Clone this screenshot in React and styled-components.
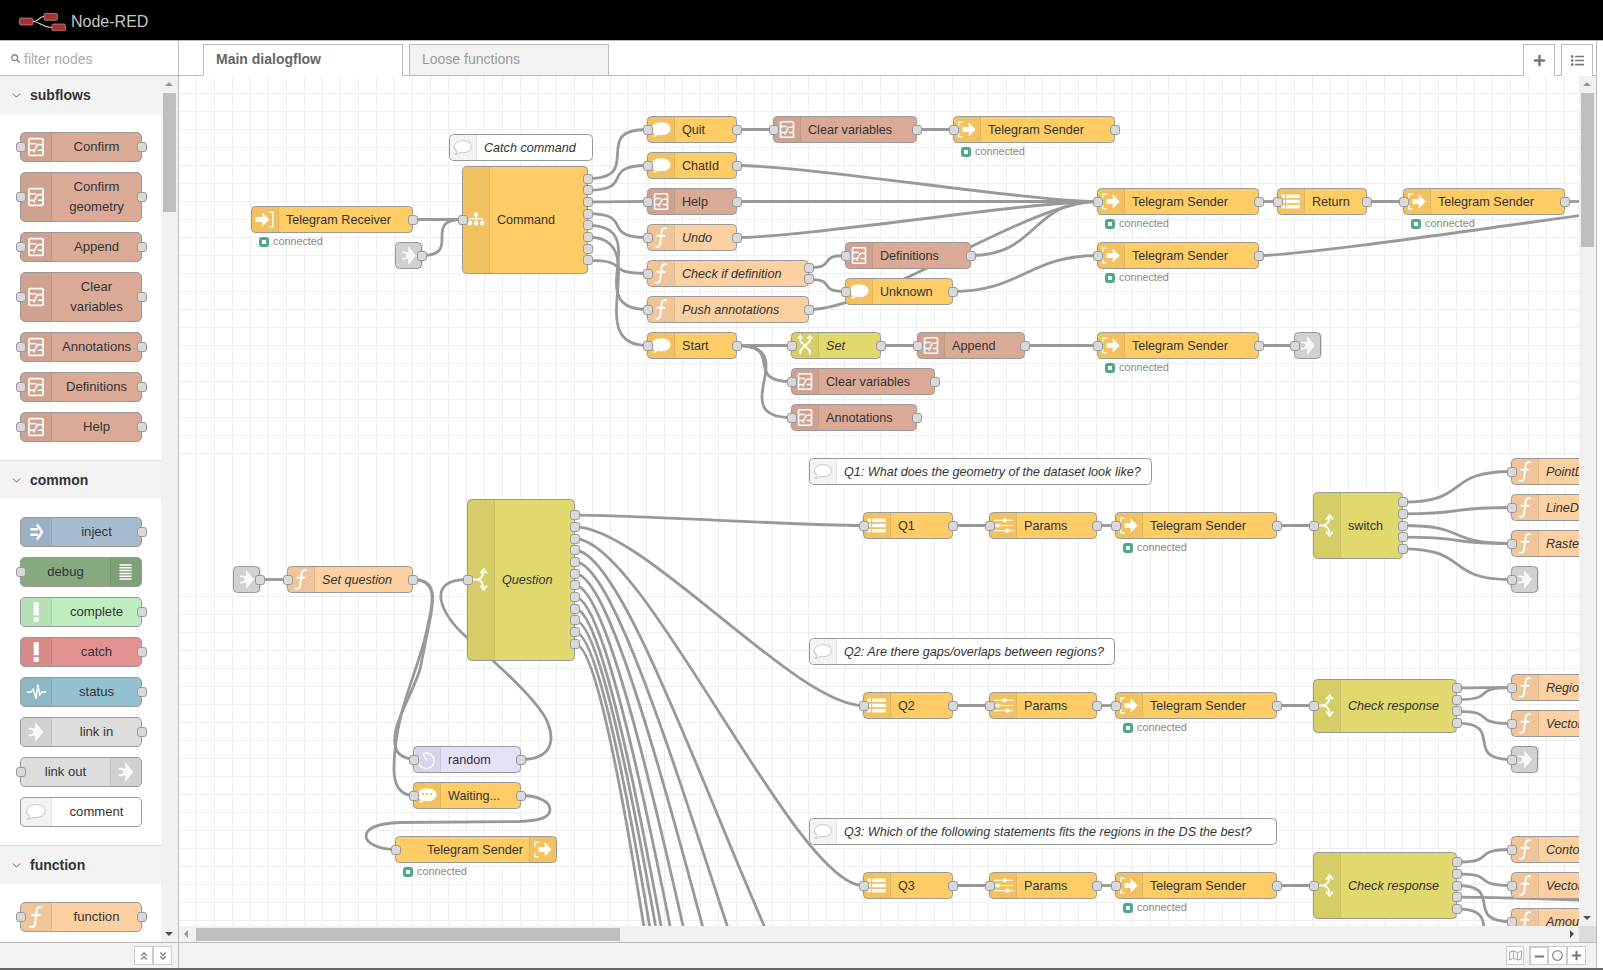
import React from "react";
import styled, { createGlobalStyle } from "styled-components";
import { ChevronDown } from "lucide-react";
import {
	FaSearch,
	FaPlus,
	FaMinus,
	FaList,
	FaAngleDoubleUp,
	FaAngleDoubleDown,
	FaRegMap,
	FaRegCircle,
} from "react-icons/fa";

const GlobalStyle = createGlobalStyle`
	html, body {
		margin: 0;
		height: 100%;
		overflow: hidden;
		background: #fff;
		font-family: "Liberation Sans", Arial, sans-serif;
		color: #333;
	}
	* {
		box-sizing: border-box;
	}
`;

const Page = styled.div`
	height: 970px;
	display: flex;
	flex-direction: column;
	border-bottom: 2px solid #666;
`;

const Header = styled.header`
	height: 41px;
	flex: none;
	background: #000;
	border-bottom: 1px solid #bbb;
	display: flex;
	align-items: center;
	padding: 3px 0 0 19px;
	gap: 5px;
`;

const Brand = styled.span`
	font-size: 16px;
	color: #c7c7c7;
`;

const Main = styled.div`
	flex: 1;
	min-height: 0;
	display: flex;
`;

const Sidebar = styled.aside`
	width: 179px;
	flex: none;
	display: flex;
	flex-direction: column;
	border-right: 1px solid #bbb;
`;

const Filter = styled.div`
	height: 35px;
	flex: none;
	display: flex;
	align-items: center;
	gap: 4px;
	padding: 1px 0 0 11px;
	border-bottom: 1px solid #bbb;
	font-size: 14px;
	color: #aaa;
	svg {
		color: #888;
		font-size: 9px;
	}
`;

const PaletteBody = styled.div`
	flex: 1;
	min-height: 0;
	display: flex;
`;

const PaletteList = styled.div`
	width: 161px;
	flex: none;
	overflow: hidden;
`;

const Category = styled.section`
	border-top: ${(props) => (props.$first ? "0" : "1px solid #ddd")};
`;

const CategoryTitle = styled.div`
	height: 38px;
	background: #f3f3f3;
	display: flex;
	align-items: center;
	gap: 7px;
	padding-left: 10px;
	font-size: 14px;
	font-weight: bold;
	color: #333;
	svg {
		color: #555;
	}
`;

const CategoryNodes = styled.div`
	padding: 18px 0 18px 20px;
	display: flex;
	flex-direction: column;
	gap: 10px;
`;

const PaletteNode = styled.div`
	position: relative;
	width: 122px;
	min-height: 30px;
	display: flex;
	flex-direction: ${(props) => (props.$iconRight ? "row-reverse" : "row")};
	background: ${(props) => props.$bg};
	border: 1px solid #999;
	border-radius: 5px;
`;

const PaletteIcon = styled.div`
	width: 31px;
	flex: none;
	display: flex;
	align-items: center;
	justify-content: center;
	background: rgba(0, 0, 0, 0.05);
	border-radius: ${(props) => (props.$right ? "0 4px 4px 0" : "4px 0 0 4px")};
	border-${(props) => (props.$right ? "left" : "right")}: 1px solid rgba(0, 0, 0, 0.08);
	svg {
		display: block;
	}
`;

const PaletteLabel = styled.div`
	flex: 1;
	padding: 4px 5px;
	font-size: 13.1px;
	line-height: 20px;
	text-align: center;
`;

const PalettePort = styled.span`
	position: absolute;
	top: 50%;
	${(props) => (props.$out ? "right: -6px" : "left: -5px")};
	width: 10px;
	height: 10px;
	margin-top: -5px;
	background: #d9d9d9;
	border: 1px solid #999;
	border-radius: 3px;
`;

const Track = styled.div`
	flex: none;
	width: ${(props) => (props.$horizontal ? "auto" : "17px")};
	height: ${(props) => (props.$horizontal ? "16px" : "auto")};
	flex-grow: ${(props) => (props.$horizontal ? 1 : 0)};
	background: #f1f1f1;
	position: relative;
	display: flex;
	flex-direction: ${(props) => (props.$horizontal ? "row" : "column")};
	align-items: center;
`;

const Thumb = styled.div`
	background: #bebebe;
	flex: none;
	width: ${(props) => (props.$horizontal ? props.$size : 13)}px;
	height: ${(props) => (props.$horizontal ? 13 : props.$size)}px;
	margin: ${(props) => (props.$horizontal ? "0 0 0 17px" : "17px 0 0 0")};
`;

const Arrow = styled.span`
	position: absolute;
	width: 0;
	height: 0;
	${(props) =>
		({
			up: "top: 6px; left: 4px; border: 4px solid transparent; border-top: 0; border-bottom: 4px solid #999;",
			down: "bottom: 6px; left: 4px; border: 4px solid transparent; border-bottom: 0; border-top: 4px solid #505050;",
			left: "left: 5px; top: 4px; border: 4px solid transparent; border-left: 0; border-right: 4px solid #999;",
			right: "right: 5px; top: 4px; border: 4px solid transparent; border-right: 0; border-left: 4px solid #505050;",
		})[props.$dir]}
`;

const Foot = styled.div`
	height: 26px;
	flex: none;
	background: #f3f3f3;
	border-top: 1px solid #bbb;
	display: flex;
	align-items: center;
	justify-content: flex-end;
	padding: 0 ${(props) => props.$pad}px 0 0;
`;

const FootButton = styled.button`
	width: ${(props) => props.$w || 19}px;
	height: 19px;
	padding: 0;
	margin-left: ${(props) => props.$gap || 0}px;
	display: flex;
	align-items: center;
	justify-content: center;
	background: #fff;
	border: 1px solid #ccc;
	border-width: ${(props) => (props.$focus ? "2px 1px 1px 2px" : "1px")};
	color: ${(props) => props.$color || "#888"};
	font-size: ${(props) => props.$size || 10}px;
`;

const Workspace = styled.div`
	width: 1418px;
	flex: none;
	display: flex;
	flex-direction: column;
	border-right: 1px solid #bbb;
`;

const TabBar = styled.div`
	height: 35px;
	flex: none;
	display: flex;
	align-items: flex-end;
	padding-left: 24px;
	gap: 6px;
	border-bottom: 1px solid #bbb;
`;

const Tab = styled.div`
	width: ${(props) => props.$w}px;
	height: 32px;
	margin-bottom: -1px;
	padding: 0 0 2px 12px;
	display: flex;
	align-items: center;
	font-size: 14px;
	font-weight: ${(props) => (props.$active ? "bold" : "normal")};
	color: ${(props) => (props.$active ? "#666" : "#999")};
	background: ${(props) => (props.$active ? "#fff" : "#f3f3f3")};
	border: 1px solid #bbb;
	border-bottom-color: ${(props) => (props.$active ? "#fff" : "#bbb")};
`;

const TabTools = styled.div`
	margin-left: auto;
	display: flex;
	gap: 6px;
	padding-right: 3px;
`;

const TabTool = styled.button`
	width: 32px;
	height: 32px;
	margin-bottom: -1px;
	padding: 0;
	display: flex;
	align-items: center;
	justify-content: center;
	background: #fff;
	border: 1px solid #bbb;
	border-bottom: 0;
	color: #777;
	font-size: 13px;
`;

const ChartRow = styled.div`
	flex: 1;
	min-height: 0;
	display: flex;
`;

const ScrollRow = styled.div`
	height: 16px;
	flex: none;
	display: flex;
`;

const Corner = styled.div`
	width: 17px;
	flex: none;
	background: #dcdcdc;
`;

const Viewport = styled.div`
	flex: 1;
	position: relative;
	overflow: hidden;
	background-color: #fff;
	background-image: repeating-linear-gradient(to right, transparent 0 17px, #eee 17px 18px),
		repeating-linear-gradient(to bottom, transparent 0 17px, #eee 17px 18px),
		repeating-linear-gradient(to bottom, transparent 0 17px, #eee 17px 18px);
	background-size: 100% 100%, 100% 378px, 100% 432px;
	background-position: 0 0, 0 0, 0 503px;
	background-repeat: no-repeat;
`;

const WireLayer = styled.svg`
	position: absolute;
	left: 0;
	top: 0;
	width: 1400px;
	height: 850px;
`;

const Wire = styled.path`
	fill: none;
	stroke: #999;
	stroke-width: 2.8;
`;

const FlowNode = styled.div`
	position: absolute;
	left: ${(props) => props.$x - 179}px;
	top: ${(props) => props.$y - 76.5}px;
	width: ${(props) => props.$w}px;
	height: ${(props) => props.$h}px;
	display: flex;
	flex-direction: ${(props) => (props.$iconRight ? "row-reverse" : "row")};
	align-items: stretch;
	background: ${(props) => props.$bg};
	border: 1px solid #999;
	border-radius: 4.5px;
`;

const FlowIcon = styled.div`
	width: 27px;
	flex: none;
	display: flex;
	align-items: center;
	justify-content: center;
	background: ${(props) => (props.$plain ? "#f3f3f3" : "rgba(0, 0, 0, 0.05)")};
	border-radius: ${(props) => (props.$right ? "0 4px 4px 0" : "4px 0 0 4px")};
	border-${(props) => (props.$right ? "left" : "right")}: 1px solid rgba(0, 0, 0, 0.06);
`;

const FlowLabel = styled.div`
	flex: 1;
	display: flex;
	align-items: center;
	padding: 0 ${(props) => (props.$iconRight ? 7 : 0)}px 0 ${(props) => (props.$iconRight ? 31 : 7)}px;
	font-size: 12.6px;
	font-style: ${(props) => (props.$italic ? "italic" : "normal")};
	white-space: nowrap;
	overflow: hidden;
	color: #333;
`;

const FlowPort = styled.span`
	position: absolute;
	top: ${(props) => props.$top}px;
	${(props) => (props.$out ? "right: -5.5px" : "left: -5.5px")};
	width: 10px;
	height: 10px;
	margin-top: -5px;
	background: #d9d9d9;
	border: 1px solid #999;
	border-radius: 3px;
`;

const StatusRow = styled.div`
	position: absolute;
	top: 100%;
	left: 7px;
	margin-top: 4px;
	display: flex;
	align-items: center;
	gap: 4px;
	font-size: 10.8px;
	line-height: 11px;
	color: #888;
`;

const StatusDot = styled.span`
	width: 10px;
	height: 10px;
	background: #fff;
	border: 3px solid #4fa88a;
	border-radius: 3px;
`;

const Logo = () => (
	<svg width="47" height="18" viewBox="0 0 47 18">
		<path d="M14 8.5C20 8.5 20 3.5 25 3.5M14 8.5C20 8.5 24 14.5 33 14.5" fill="none" stroke="#d8d8d8" strokeWidth="1.2" />
		<rect x="0.5" y="5" width="13.5" height="7" rx="1.5" fill="#a33333" stroke="#d8b0b0" strokeWidth=".6" />
		<rect x="25" y="0.3" width="13.5" height="7" rx="1.5" fill="#a33333" stroke="#d8b0b0" strokeWidth=".6" />
		<rect x="33" y="11" width="13.5" height="7" rx="1.5" fill="#a33333" stroke="#d8b0b0" strokeWidth=".6" />
	</svg>
);

const W = "#fff";

// drawings share a 30x30 box
const glyphs = {
	subflow: (
		<g fill="none" stroke={W} strokeWidth="1.8">
			<rect x="7.500" y="6" width="15" height="18" rx="1" />
			<path d="M7.500 11.500H15M7.500 18.500h5c3 0 2-6 5-6h5M17 18.500h5.500M13 18.500v2.500" />
		</g>
	),
	arrowIn: (
		<g fill={W}>
			<path d="M4 12h8V7l8 8-8 8v-5H4z" />
			<path d="M20 6.500h4v17h-4" fill="none" stroke={W} strokeWidth="1.400" />
		</g>
	),
	arrowOut: (
		<g fill={W}>
			<path d="M10 12h7V7l8 8-8 8v-5h-7z" />
			<path d="M10 6.500H5.500v5M5.500 18.500v5H10" fill="none" stroke={W} strokeWidth="1.400" />
		</g>
	),
	bubble: <path fill={W} d="M15 6.500c6.500 0 11 3.300 11 7.500s-4.500 7.500-11 7.500c-1.300 0-2.500-.1-3.500-.4-1.500 1.400-3.500 2.200-6 2.400 1.200-1 2-2.300 2.200-3.900C5.300 18.300 4 16.300 4 14c0-4.200 4.500-7.500 11-7.500z" />,
	waiting: (
		<g>
			<path fill={W} d="M15 6.500c6.500 0 11 3.300 11 7.500s-4.500 7.500-11 7.500c-1.300 0-2.500-.1-3.500-.4-1.500 1.400-3.500 2.200-6 2.400 1.200-1 2-2.300 2.200-3.900C5.300 18.300 4 16.300 4 14c0-4.200 4.500-7.500 11-7.500z" />
			<circle cx="10.500" cy="13.500" r="1.300" fill="#f0bd5c" />
			<circle cx="15" cy="13.500" r="1.300" fill="#f0bd5c" />
			<circle cx="19.500" cy="13.500" r="1.300" fill="#f0bd5c" />
		</g>
	),
	note: (
		<path fill="#fff" stroke="#ccc" strokeWidth="1.200" d="M15 7c6 0 10 3 10 7s-4 7-10 7c-1.200 0-2.400-.1-3.400-.4-1.500 1.400-3.200 2-5.600 2.200 1.200-1 1.900-2.200 2.100-3.700C5.800 18.200 5 16.200 5 14c0-4 4-7 10-7z" />
	),
	func: (
		<g fill="none" stroke={W} strokeWidth="2.200" strokeLinecap="round">
			<path d="M21 4.500c-3.500-1-4.800.8-5.300 4l-1.600 13c-.5 3.500-2 5-5.300 4" />
			<path d="M10.500 13H19" />
		</g>
	),
	tree: (
		<g fill={W}>
			<rect x="13" y="7" width="4.500" height="4.500" rx="1" />
			<rect x="6" y="17" width="4.500" height="4.500" rx="1" />
			<rect x="13" y="17" width="4.500" height="4.500" rx="1" />
			<rect x="20" y="17" width="4.500" height="4.500" rx="1" />
			<path d="M8.200 17v-3h14v3M15.200 11v6" fill="none" stroke={W} strokeWidth="1.200" />
		</g>
	),
	fork: (
		<g fill="none" stroke={W} strokeWidth="2.200">
			<path d="M5 15h5c4 0 7-3 8-9M10 15c4 0 7 3 8 9" />
			<path d="M14 8l4-5 4 5M14 22l4 5 4-5" strokeWidth="2" />
		</g>
	),
	list: (
		<g fill={W}>
			<rect x="4" y="7" width="4" height="4" />
			<rect x="9.500" y="7" width="15.500" height="4" />
			<rect x="4" y="13" width="4" height="4" />
			<rect x="9.500" y="13" width="15.500" height="4" />
			<rect x="4" y="19" width="4" height="4" />
			<rect x="9.500" y="19" width="15.500" height="4" />
		</g>
	),
	sliders: (
		<g fill={W} stroke={W} strokeWidth="1.200">
			<path d="M4 9h23M4 15h23M4 21h23" />
			<circle cx="17" cy="9" r="1.800" />
			<circle cx="9" cy="15" r="1.800" />
			<circle cx="20" cy="21" r="1.800" />
		</g>
	),
	shuffle: (
		<g fill="none" stroke={W} strokeWidth="2.200">
			<path d="M9.500 25v-4l11-11V6M20.500 25v-4l-11-11V6" />
			<path d="M6.500 7l3-3.500 3 3.500M17.500 7l3-3.500 3 3.500" strokeWidth="1.500" />
		</g>
	),
	clock: (
		<g fill="none" stroke={W} strokeWidth="1.600" opacity=".85">
			<path d="M10 8.500a9 9 0 1 1-3.700 3.500" />
			<path d="M15 16L10.500 9.500" />
		</g>
	),
	link: (
		<g opacity=".85">
			<path fill={W} d="M14 4l9 11-9 11v-7h-2v-8h2z" />
			<path fill="none" stroke={W} strokeWidth="2" d="M7 11.500h2.500a3.500 3.500 0 0 1 0 7H7M13 15h-1" />
		</g>
	),
	inject: (
		<g fill="none" stroke={W} strokeWidth="2.600">
			<path d="M9 12h8M9 18h8" />
			<path d="M16 7l5.500 8-5.500 8" />
		</g>
	),
	lines: (
		<g stroke={W} strokeWidth="1.600">
			<path d="M8 7.500h13M8 10.500h13M8 13.500h13M8 16.500h13M8 19.500h13M8 22.500h13" />
		</g>
	),
	alert: (
		<g fill={W}>
			<rect x="12.500" y="4.500" width="5.500" height="14" />
			<rect x="12.500" y="20.500" width="5.500" height="5" />
		</g>
	),
	wave: <path d="M5 15h5l2-3 3 10 2-15 2 11 2-3h5" fill="none" stroke={W} strokeWidth="1.600" />,
};

const Glyph = ({ name, size = 27 }) => (
	<svg width={size} height={size} viewBox="0 0 30 30">
		{glyphs[name]}
	</svg>
);

const colors = {
	tele: "#ffcc66",
	sub: "#dbaa97",
	func: "#fdd0a2",
	sw: "#e2d96e",
	link: "#ddd",
	note: "#fff",
	delay: "#e6e0f8",
};

// a canvas node: x, centre y, width, colour, drawing, label
const n = (id, x, cy, w, color, icon, label, extra = {}) => ({ id, x, cy, w, color, icon, label, h: 27, ins: 1, outs: 1, ...extra });

const nodes = [
	n("catch", 449, 148, 144, "note", "note", "Catch command", { italic: true, ins: 0, outs: 0 }),
	n("recv", 251, 220, 162, "tele", "arrowIn", "Telegram Receiver", { ins: 0, status: true }),
	n("linkA", 395, 256, 27, "link", "link", "", { ins: 0 }),
	n("cmd", 462, 220, 126, "tele", "tree", "Command", { h: 108, outs: 8 }),
	n("quit", 647, 130, 90, "tele", "bubble", "Quit"),
	n("chat", 647, 166, 90, "tele", "bubble", "ChatId"),
	n("help", 647, 202, 90, "sub", "subflow", "Help"),
	n("undo", 647, 238, 90, "func", "func", "Undo", { italic: true }),
	n("check", 647, 274, 162, "func", "func", "Check if definition", { italic: true, outs: 2 }),
	n("push", 647, 310, 162, "func", "func", "Push annotations", { italic: true }),
	n("start", 647, 346, 90, "tele", "bubble", "Start"),
	n("clear1", 773, 130, 144, "sub", "subflow", "Clear variables"),
	n("ts1", 953, 130, 162, "tele", "arrowOut", "Telegram Sender", { status: true }),
	n("ts2", 1097, 202, 162, "tele", "arrowOut", "Telegram Sender", { status: true }),
	n("ret", 1277, 202, 90, "tele", "list", "Return"),
	n("ts5", 1403, 202, 162, "tele", "arrowOut", "Telegram Sender", { status: true }),
	n("linkEnd", 1584, 202, 27, "link", "link", "", { outs: 0 }),
	n("defs", 845, 256, 126, "sub", "subflow", "Definitions"),
	n("unknown", 845, 292, 108, "tele", "bubble", "Unknown"),
	n("ts3", 1097, 256, 162, "tele", "arrowOut", "Telegram Sender", { status: true }),
	n("set", 791, 346, 90, "sw", "shuffle", "Set", { italic: true }),
	n("append", 917, 346, 108, "sub", "subflow", "Append"),
	n("ts4", 1097, 346, 162, "tele", "arrowOut", "Telegram Sender", { status: true }),
	n("linkB", 1294, 346, 27, "link", "link", "", { outs: 0 }),
	n("clear2", 791, 382, 144, "sub", "subflow", "Clear variables"),
	n("annot", 791, 418, 126, "sub", "subflow", "Annotations"),

	n("linkC", 233, 580, 27, "link", "link", "", { ins: 0 }),
	n("setq", 287, 580, 126, "func", "func", "Set question", { italic: true }),
	n("question", 467, 580, 108, "sw", "fork", "Question", { italic: true, h: 162, outs: 12 }),
	n("random", 413, 760, 108, "delay", "clock", "random"),
	n("waiting", 413, 796, 108, "tele", "waiting", "Waiting..."),
	n("tsBack", 395, 850, 162, "tele", "arrowOut", "Telegram Sender", { iconRight: true, outs: 0, status: true }),

	n("c1", 809, 472, 343, "note", "note", "Q1: What does the geometry of the dataset look like?", { italic: true, ins: 0, outs: 0 }),
	n("q1", 863, 526, 90, "tele", "list", "Q1"),
	n("p1", 989, 526, 108, "tele", "sliders", "Params"),
	n("t1", 1115, 526, 162, "tele", "arrowOut", "Telegram Sender", { status: true }),
	n("switch", 1313, 526, 90, "sw", "fork", "switch", { h: 67, outs: 5 }),
	n("point", 1511, 472, 126, "func", "func", "PointData", { italic: true, outs: 0 }),
	n("line", 1511, 508, 126, "func", "func", "LineData", { italic: true, outs: 0 }),
	n("raster", 1511, 544, 126, "func", "func", "RasterData", { italic: true, outs: 0 }),
	n("linkD", 1511, 580, 27, "link", "link", "", { outs: 0 }),

	n("c2", 809, 652, 306, "note", "note", "Q2: Are there gaps/overlaps between regions?", { italic: true, ins: 0, outs: 0 }),
	n("q2", 863, 706, 90, "tele", "list", "Q2"),
	n("p2", 989, 706, 108, "tele", "sliders", "Params"),
	n("t2", 1115, 706, 162, "tele", "arrowOut", "Telegram Sender", { status: true }),
	n("resp2", 1313, 706, 144, "sw", "fork", "Check response", { italic: true, h: 54, outs: 4 }),
	n("region", 1511, 688, 126, "func", "func", "Regions", { italic: true, outs: 0 }),
	n("vector", 1511, 724, 126, "func", "func", "Vector", { italic: true, outs: 0 }),
	n("linkE", 1511, 760, 27, "link", "link", "", { outs: 0 }),

	n("c3", 809, 832, 468, "note", "note", "Q3: Which of the following statements fits the regions in the DS the best?", { italic: true, ins: 0, outs: 0 }),
	n("q3", 863, 886, 90, "tele", "list", "Q3"),
	n("p3", 989, 886, 108, "tele", "sliders", "Params"),
	n("t3", 1115, 886, 162, "tele", "arrowOut", "Telegram Sender", { status: true }),
	n("resp3", 1313, 886, 144, "sw", "fork", "Check response", { italic: true, h: 67, outs: 5 }),
	n("contour", 1511, 850, 126, "func", "func", "Contour", { italic: true, outs: 0 }),
	n("vector2", 1511, 886, 126, "func", "func", "Vector", { italic: true, outs: 0 }),
	n("amount", 1511, 922, 126, "func", "func", "Amount", { italic: true, outs: 0 }),
];

const byId = Object.fromEntries(nodes.map((node) => [node.id, node]));

const portY = (node, i) => node.cy + (i - (node.outs - 1) / 2) * 11.7;

const curve = (x1, y1, x2, y2) => {
	const delta = Math.hypot(x2 - x1, y2 - y1);
	const c = Math.min(67.5, 0.75 * delta);
	return `M${x1} ${y1}C${x1 + c} ${y1} ${x2 - c} ${y2} ${x2} ${y2}`;
};

// [from, output, to]: "to" is a node id, or a point for what lies off the canvas
const links = [
	["recv", 0, "cmd"], ["linkA", 0, "cmd"],
	["cmd", 0, "quit"], ["cmd", 1, "chat"], ["cmd", 2, "help"], ["cmd", 3, "undo"],
	["cmd", 4, "push"], ["cmd", 5, "start"], ["cmd", 7, "check"],
	["quit", 0, "clear1"], ["clear1", 0, "ts1"],
	["chat", 0, "ts2"], ["help", 0, "ts2"], ["undo", 0, "ts2"], ["defs", 0, "ts2"], ["push", 0, "ts2"],
	["check", 0, "defs"], ["check", 1, "unknown"], ["unknown", 0, "ts3"],
	["ts2", 0, "ret"], ["ret", 0, "ts5"], ["ts5", 0, "linkEnd"], ["ts3", 0, [1800, 190]],
	["start", 0, "set"], ["start", 0, "clear2"], ["start", 0, "annot"],
	["set", 0, "append"], ["append", 0, "ts4"], ["ts4", 0, "linkB"],
	["linkC", 0, "setq"],
	["question", 0, "q1"], ["question", 1, "q2"], ["question", 2, "q3"],
	["question", 3, [863, 1087]], ["question", 4, [863, 1240]], ["question", 5, [863, 1402]],
	["question", 6, [863, 1592]], ["question", 7, [863, 1764]], ["question", 8, [863, 1908]],
	["question", 9, [863, 2000]], ["question", 10, [863, 2120]], ["question", 11, [863, 2260]],
	["q1", 0, "p1"], ["p1", 0, "t1"], ["t1", 0, "switch"],
	["switch", 0, "point"], ["switch", 1, "line"], ["switch", 2, "raster"], ["switch", 3, "raster"], ["switch", 4, "linkD"],
	["q2", 0, "p2"], ["p2", 0, "t2"], ["t2", 0, "resp2"],
	["resp2", 0, "region"], ["resp2", 1, "region"], ["resp2", 2, "vector"], ["resp2", 3, "linkE"],
	["q3", 0, "p3"], ["p3", 0, "t3"], ["t3", 0, "resp3"],
	["resp3", 0, "contour"], ["resp3", 1, "vector2"], ["resp3", 2, "amount"], ["resp3", 3, [1750, 905]], ["resp3", 4, [1511, 958]],
];

// wires that run backwards, so they loop
const loops = [
	"M413 580C437 580 434 600 430 620L420 670C410 700 392 725 395 745C396 755 403 758 413 760",
	"M413 580C437 580 434 600 428 625C420 670 394 710 394 770C394 785 400 796 413 796",
	"M521 760C548 760 556 745 548 724C540 700 480 650 467 638C440 615 425 580 467 580",
	"M521 796C538 796 550 802 550 810C550 818 540 821 520 822L400 823C375 824 366 830 366 837C366 843 378 850 395 850",
];

const linkPath = ([from, port, to]) => {
	const a = byId[from];
	const [x2, y2] = Array.isArray(to) ? to : [byId[to].x, byId[to].cy];
	return curve(a.x + a.w, portY(a, port), x2, y2);
};

const CanvasNode = ({ node }) => {
	const { x, cy, w, h, color, icon, label, italic, ins, outs, status, iconRight } = node;
	return (
		<FlowNode $x={x} $y={cy - h / 2} $w={w} $h={h} $bg={colors[color]} $iconRight={iconRight}>
			<FlowIcon $plain={color === "note"} $right={iconRight}>
				<Glyph name={icon} />
			</FlowIcon>
			{label && (
				<FlowLabel $italic={italic} $iconRight={iconRight}>
					{label}
				</FlowLabel>
			)}
			{ins > 0 && <FlowPort $top={h / 2 - 1} />}
			{Array.from({ length: outs }, (_, i) => (
				<FlowPort key={i} $out $top={h / 2 - 1 + (i - (outs - 1) / 2) * 11.7} />
			))}
			{status && (
				<StatusRow>
					<StatusDot />
					connected
				</StatusRow>
			)}
		</FlowNode>
	);
};

const palette = [
	{
		title: "subflows",
		items: [
			["Confirm", "#dbaa97", "subflow"],
			["Confirm geometry", "#dbaa97", "subflow"],
			["Append", "#dbaa97", "subflow"],
			["Clear variables", "#dbaa97", "subflow"],
			["Annotations", "#dbaa97", "subflow"],
			["Definitions", "#dbaa97", "subflow"],
			["Help", "#dbaa97", "subflow"],
		],
	},
	{
		title: "common",
		items: [
			["inject", "#a6bbcf", "inject", "out"],
			["debug", "#87a980", "lines", "in", true],
			["complete", "#c0edc0", "alert", "out"],
			["catch", "#e49191", "alert", "out"],
			["status", "#94c1d0", "wave", "out"],
			["link in", "#ddd", "link", "out"],
			["link out", "#ddd", "link", "in", true],
			["comment", "#fff", "note", "none"],
		],
	},
	{ title: "function", items: [["function", "#fdd0a2", "func"]] },
];

const PaletteItem = ({ label, bg, icon, ports = "both", iconRight }) => (
	<PaletteNode $bg={bg} $iconRight={iconRight}>
		<PaletteIcon $right={iconRight}>
			<Glyph name={icon} size={28} />
		</PaletteIcon>
		<PaletteLabel>{label}</PaletteLabel>
		{(ports === "both" || ports === "in") && <PalettePort />}
		{(ports === "both" || ports === "out") && <PalettePort $out />}
	</PaletteNode>
);

const App = () => (
	<Page>
		<GlobalStyle />
		<Header>
			<Logo />
			<Brand>Node-RED</Brand>
		</Header>
		<Main>
			<Sidebar>
				<Filter>
					<FaSearch />
					filter nodes
				</Filter>
				<PaletteBody>
					<PaletteList>
						{palette.map((category, i) => (
							<Category key={category.title} $first={i === 0}>
								<CategoryTitle>
									<ChevronDown size={13} strokeWidth={1.6} />
									{category.title}
								</CategoryTitle>
								<CategoryNodes>
									{category.items.map(([label, bg, icon, ports, iconRight]) => (
										<PaletteItem key={label} label={label} bg={bg} icon={icon} ports={ports} iconRight={iconRight} />
									))}
								</CategoryNodes>
							</Category>
						))}
					</PaletteList>
					<Track>
						<Arrow $dir="up" />
						<Thumb $size={119} />
						<Arrow $dir="down" />
					</Track>
				</PaletteBody>
				<Foot $pad={6}>
					<FootButton>
						<FaAngleDoubleUp />
					</FootButton>
					<FootButton>
						<FaAngleDoubleDown />
					</FootButton>
				</Foot>
			</Sidebar>
			<Workspace>
				<TabBar>
					<Tab $active $w={200}>Main dialogflow</Tab>
					<Tab $w={200}>Loose functions</Tab>
					<TabTools>
						<TabTool>
							<FaPlus />
						</TabTool>
						<TabTool>
							<FaList />
						</TabTool>
					</TabTools>
				</TabBar>
				<ChartRow>
					<Viewport>
						<WireLayer viewBox="179 76.5 1400 850">
							{links.map((link, i) => (
								<Wire key={i} d={linkPath(link)} />
							))}
							{loops.map((d) => (
								<Wire key={d} d={d} />
							))}
						</WireLayer>
						{nodes.map((node) => (
							<CanvasNode key={node.id} node={node} />
						))}
					</Viewport>
					<Track>
						<Arrow $dir="up" />
						<Thumb $size={154} />
						<Arrow $dir="down" />
					</Track>
				</ChartRow>
				<ScrollRow>
					<Track $horizontal>
						<Arrow $dir="left" />
						<Thumb $horizontal $size={424} />
						<Arrow $dir="right" />
					</Track>
					<Corner />
				</ScrollRow>
				<Foot $pad={10}>
					<FootButton $w={18} $size={13} $color="#aaa">
						<FaRegMap />
					</FootButton>
					<FootButton $gap={5} $focus $size={11} $color="#777">
						<FaMinus />
					</FootButton>
					<FootButton $size={11} $color="#777">
						<FaRegCircle />
					</FootButton>
					<FootButton $size={11} $color="#777">
						<FaPlus />
					</FootButton>
				</Foot>
			</Workspace>
		</Main>
	</Page>
);

export default App;
